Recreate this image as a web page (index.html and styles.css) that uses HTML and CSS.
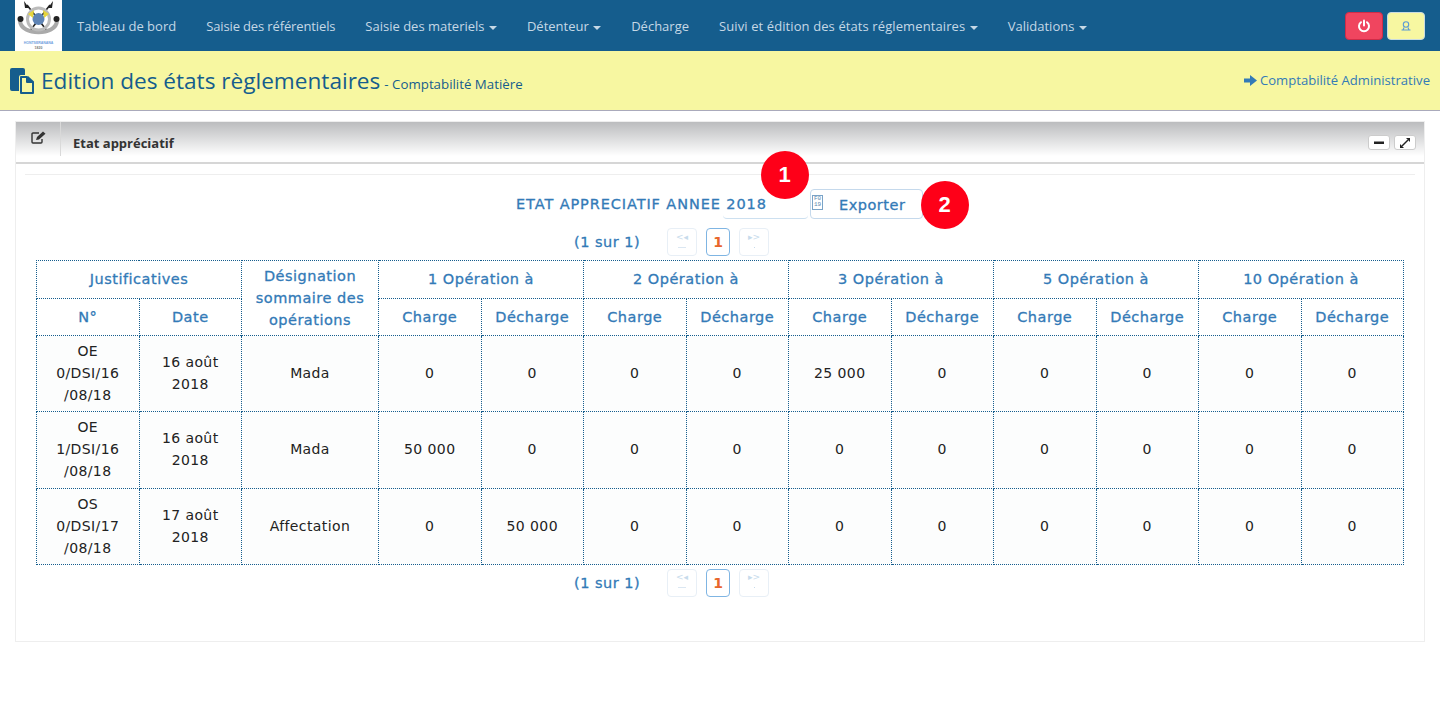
FILE: index.html
```html
<!DOCTYPE html>
<html lang="fr">
<head>
<meta charset="utf-8">
<title>Edition des états règlementaires</title>
<link rel="stylesheet" href="styles.css">
</head>
<body>
<nav class="nav">
  <div class="logo">
    <svg width="47" height="51" viewBox="0 0 47 51">
      <rect width="47" height="51" fill="#fff"/>
      <path d="M12 5 L33 32 M35 5 L14 32" stroke="#222" stroke-width="1.6"/>
      <path d="M9 1 L14 8 L10 8Z M38 1 L33 8 L37 8Z" fill="#222"/>
      <path d="M5 21 C6 36 41 36 42 21" fill="none" stroke="#aaa" stroke-width="4"/>
      <circle cx="23.500" cy="19" r="11" fill="none" stroke="#bbb" stroke-width="3"/>
      <circle cx="23.500" cy="19" r="6" fill="#5f84b5"/>
      <path d="M13 14 L19 10 L18 18Z M34 14 L28 10 L29 18Z" fill="#e6d53c"/>
      <circle cx="5.500" cy="19" r="3" fill="#222"/><circle cx="41.500" cy="19" r="3" fill="#222"/>
      <text class="logo-name" x="23.500" y="44" text-anchor="middle">HONTSERANANA</text>
      <text class="logo-year" x="23.500" y="49" text-anchor="middle">1820</text>
    </svg>
  </div>
  <ul class="menu">
    <li>Tableau de bord</li>
    <li class="tight">Saisie des référentiels</li>
    <li>Saisie des materiels <i class="caret"></i></li>
    <li>Détenteur <i class="caret"></i></li>
    <li>Décharge</li>
    <li class="loose">Suivi et édition des états réglementaires <i class="caret"></i></li>
    <li>Validations <i class="caret"></i></li>
  </ul>
  <div class="nav-actions">
    <button class="btn-power" aria-label="Déconnexion">
      <svg width="14" height="14" viewBox="0 0 14 14" fill="none" stroke="#fff" stroke-width="2" stroke-linecap="round"><path d="M4 3.200 A5 5 0 1 0 10 3.200"/><path d="M7 1.500 V6.500"/></svg>
    </button>
    <button class="btn-user" aria-label="Utilisateur">
      <svg width="12" height="12" viewBox="0 0 12 12" fill="none" stroke="#5b9bd5" stroke-width="1.100"><circle cx="6" cy="4.500" r="2.700"/><path d="M1.500 10 H10.500 M3 10 L4 7.500 M9 10 L8 7.500"/></svg>
    </button>
  </div>
</nav>

<header class="page-head">
  <div class="title-wrap">
    <svg class="title-icon" width="24" height="26" viewBox="0 0 24 26"><path d="M2 0 H13 A2 2 0 0 1 15 2 V7 H11 A2 2 0 0 0 9 9 V23 H2 A2 2 0 0 1 0 21 V2 A2 2 0 0 1 2 0Z" fill="#155d8d"/><path d="M11 9 H17 V14 H23 V25 H11Z" fill="#f7f7a1" stroke="#155d8d" stroke-width="2" stroke-linejoin="round"/><path d="M18 8 L24 13.500 H18Z" fill="#155d8d"/></svg>
    <h1 class="page-title">Edition des états règlementaires</h1>
    <small class="page-sub">- Comptabilité Matière</small>
  </div>
  <a class="admin-link"><svg width="13" height="13" viewBox="0 0 13 13"><path d="M0 4.500 H6 V1 L13 6.500 L6 12 V8.500 H0Z" fill="#337ab7"/></svg> Comptabilité Administrative</a>
</header>

<section class="panel">
  <div class="panel-head">
    <div class="panel-icon">
      <svg width="15" height="13" viewBox="0 0 15 13" fill="none"><path d="M11 8 V11 A1 1 0 0 1 10 12 H2 A1 1 0 0 1 1 11 V3 A1 1 0 0 1 2 2 H8" stroke="#333" stroke-width="1.400"/><path d="M5 9 L6 6 L12 0.500 L14.500 2.800 L8 8.500Z" fill="#333"/></svg>
    </div>
    <h2 class="panel-title">Etat appréciatif</h2>
    <div class="panel-tools">
      <button class="tool"><svg width="10" height="10" viewBox="0 0 10 10"><rect x="0" y="3.500" width="10" height="2.500" fill="#222"/></svg></button>
      <button class="tool"><svg width="10" height="10" viewBox="0 0 10 10"><path d="M0 10 V6 L4 10Z M10 0 V4 L6 0Z" fill="#222"/><path d="M2 8 L8 2" stroke="#222" stroke-width="1.500"/></svg></button>
    </div>
  </div>
  <div class="panel-body">
    <div class="toolbar">
      <div class="report-title"><span>ETAT APPRECIATIF ANNEE 2018</span><span class="ghost"></span></div>
      <button class="btn-export"><span class="glyph"><span>F0</span><span>19</span></span><span class="btn-label">Exporter</span></button>
    </div>
    <div class="pager">
      <span class="pager-count">(1 sur 1)</span>
      <span class="page-btn off first">&lt;◂</span>
      <span class="page-btn current">1</span>
      <span class="page-btn off last">▸&gt;</span>
    </div>
    <table class="grid">
      <colgroup><col class="c-n"><col class="c-d"><col class="c-l"><col span="10" class="c-v"></colgroup>
      <thead>
        <tr class="r-h">
          <th colspan="2">Justificatives</th>
          <th rowspan="2">Désignation sommaire des opérations</th>
          <th colspan="2">1 Opération à</th>
          <th colspan="2">2 Opération à</th>
          <th colspan="2">3 Opération à</th>
          <th colspan="2">5 Opération à</th>
          <th colspan="2">10 Opération à</th>
        </tr>
        <tr class="r-h">
          <th>N°</th><th>Date</th>
          <th>Charge</th><th>Décharge</th><th>Charge</th><th>Décharge</th><th>Charge</th><th>Décharge</th><th>Charge</th><th>Décharge</th><th>Charge</th><th>Décharge</th>
        </tr>
      </thead>
      <tbody>
        <tr><td>OE 0/DSI/16 /08/18</td><td>16 août 2018</td><td>Mada</td><td>0</td><td>0</td><td>0</td><td>0</td><td>25 000</td><td>0</td><td>0</td><td>0</td><td>0</td><td>0</td></tr>
        <tr><td>OE 1/DSI/16 /08/18</td><td>16 août 2018</td><td>Mada</td><td>50 000</td><td>0</td><td>0</td><td>0</td><td>0</td><td>0</td><td>0</td><td>0</td><td>0</td><td>0</td></tr>
        <tr><td>OS 0/DSI/17 /08/18</td><td>17 août 2018</td><td>Affectation</td><td>0</td><td>50 000</td><td>0</td><td>0</td><td>0</td><td>0</td><td>0</td><td>0</td><td>0</td><td>0</td></tr>
      </tbody>
    </table>
    <div class="pager pager-bottom">
      <span class="pager-count">(1 sur 1)</span>
      <span class="page-btn off first">&lt;◂</span>
      <span class="page-btn current">1</span>
      <span class="page-btn off last">▸&gt;</span>
    </div>
  </div>
  <span class="marker m1">1</span>
  <span class="marker m2">2</span>
</section>
</body>
</html>
```
FILE: styles.css
```css
* { box-sizing: border-box; }
html, body { margin: 0; padding: 0; }
body { background: #fff; font-family: "Open Sans", sans-serif; color: #333; height: 725px; overflow: hidden; }

.nav { display: flex; align-items: center; height: 51px; background: #155d8d; padding-left: 15px; padding-right: 15px; }
.logo { width: 47px; height: 51px; flex: none; }
.logo svg { display: block; }
.logo-name { font: 700 3.500px "Liberation Sans", sans-serif; fill: #6f9fe0; }
.logo-year { font: 700 3.500px "Liberation Sans", sans-serif; fill: #777; }
.menu { display: flex; list-style: none; margin: 0 0 0 15px; padding: 0; gap: 30px; font-size: 13px; color: #c5d8e6; }
.menu li { white-space: nowrap; line-height: 18px; margin-top: 1px; }
.menu .tight { letter-spacing: -0.13px; }
.menu .loose { letter-spacing: 0.1px; }
.caret { display: inline-block; width: 0; height: 0; margin-left: 1px; vertical-align: middle; border-top: 4px solid #c5d8e6; border-left: 4px solid transparent; border-right: 4px solid transparent; }
.nav-actions { margin-left: auto; display: flex; gap: 4px; }
.nav-actions button { width: 38px; height: 28px; border-radius: 4px; display: flex; align-items: center; justify-content: center; padding: 0; }
.btn-power { background: #f0455f; border: 1px solid #d02c48; }
.btn-user { background: #f7f7a1; border: 1px solid #c9dbe0; }

.page-head { display: flex; justify-content: space-between; align-items: center; height: 60px; background: #f7f7a1; border-bottom: 1px solid #aab; padding: 0 10px; }
.title-wrap { display: flex; align-items: baseline; white-space: nowrap; }
.page-title { margin: 0; font-size: 22.600px; line-height: 30px; font-weight: 400; color: #155d8d; }
.title-icon { align-self: center; margin-right: 7px; }
.page-sub { margin-left: 4px; font-size: 13.300px; color: #155d8d; }
.admin-link { display: flex; align-items: center; gap: 3px; font-size: 13.100px; color: #337ab7; margin-top: -1px; }

.panel { position: relative; margin: 10px 15px 0; height: 521px; border: 1px solid #eee; }
.panel-head { display: flex; align-items: stretch; height: 42px; background: linear-gradient(#bbbcbe, #fff 85%); border-bottom: 2px solid #d6d6d6; }
.panel-icon { width: 45px; height: 34px; display: flex; justify-content: center; padding-top: 9px; border-right: 1px solid #d9d9d9; }
.panel-title { margin: 0 0 0 12px; font-size: 13px; font-weight: 700; color: #333; line-height: 42px; }
.panel-tools { margin-left: auto; display: flex; gap: 4px; padding: 13px 8px 0 0; }
.tool { width: 22px; height: 15px; padding: 0; background: #fff; border: 1px solid #ccc; border-radius: 3px; display: flex; align-items: center; justify-content: center; }

.panel-body { margin: 10px 9px 0; padding: 0 11px; border-top: 1px solid #eee; }
.toolbar { display: flex; align-items: flex-start; padding: 14px 0 0 480px; height: 57px; }
.report-title { position: relative; display: flex; width: 292px; height: 30px; font-family: "DejaVu Sans", sans-serif; font-size: 14.500px; color: #337ab7; letter-spacing: 0.9px; line-height: 31px; -webkit-text-stroke: 0.3px #337ab7; white-space: nowrap; }
.ghost { position: absolute; right: 0; bottom: 0; width: 85px; height: 12px; border-bottom: 1px solid #cde0f0; border-radius: 0 0 4px 4px; }
.btn-export { display: flex; align-items: center; width: 113px; height: 30px; margin-left: 2px; padding: 0; background: #fff; border: 1px solid #c5d9ec; border-radius: 4px; color: #337ab7; font-family: "DejaVu Sans", sans-serif; font-size: 14.500px; -webkit-text-stroke: 0.3px #337ab7; letter-spacing: 0.5px; }
.glyph { display: flex; flex-direction: column; align-items: center; width: 11px; height: 15px; margin: -4px 0 0 1px; border: 1px solid #7aa3c7; font: 6px/6px "Liberation Mono", monospace; -webkit-text-stroke: 0; color: #5a88b0; letter-spacing: 0; }
.btn-label { margin-left: 16px; padding-top: 2px; }

.pager { display: flex; align-items: center; height: 28px; padding-left: 538px; margin-top: -4px; font-family: "DejaVu Sans", sans-serif; }
.pager-count { width: 93px; font-size: 14.500px; color: #337ab7; -webkit-text-stroke: 0.3px #337ab7; letter-spacing: 0.5px; white-space: nowrap; }
.page-btn { display: flex; flex-direction: column; align-items: center; justify-content: center; height: 28px; border-radius: 4px; font-size: 9px; line-height: 12px; margin-right: 9px; }
.page-btn.off { width: 30px; border: 1px solid #e8eff6; color: #c7dbec; padding-bottom: 6px; }
.page-btn.current { width: 24px; border: 1px solid #7fb5e3; color: #e8662c; font-size: 14px; font-weight: 700; }
.page-btn.first::after { content: ""; width: 8px; height: 1px; margin-top: 4px; background: #dbe7f2; }
.page-btn.last::after { content: ""; width: 1px; height: 1px; margin-top: 4px; background: #c7dbec; }

.grid { table-layout: fixed; border-collapse: collapse; width: 1367px; margin: 4px 0 0; font-family: "DejaVu Sans", sans-serif; font-size: 14px; letter-spacing: 0.4px; }
.c-n { width: 102.500px; }
.c-d { width: 102.500px; }
.c-l { width: 137px; }
.c-v { width: 102.500px; }
.grid th, .grid td { border: 1px dotted #155d8d; padding: 0 8px; text-align: center; vertical-align: middle; line-height: 22px; font-weight: 400; }
.grid th { color: #337ab7; font-size: 14.500px; letter-spacing: 0.5px; -webkit-text-stroke: 0.3px #337ab7; height: 37.500px; padding: 0 3px; }
.grid td { color: #222; height: 76.330px; padding-bottom: 1px; background: #fcfdfd; }

.pager-bottom { margin-top: 4px; }

.marker { position: absolute; width: 48px; height: 48px; border-radius: 50%; background: #fe0018; color: #fff; font: 700 22px/48px "Liberation Sans", sans-serif; text-align: center; }
.m1 { left: 744.500px; top: 29px; }
.m2 { left: 904.500px; top: 58.500px; }
```
